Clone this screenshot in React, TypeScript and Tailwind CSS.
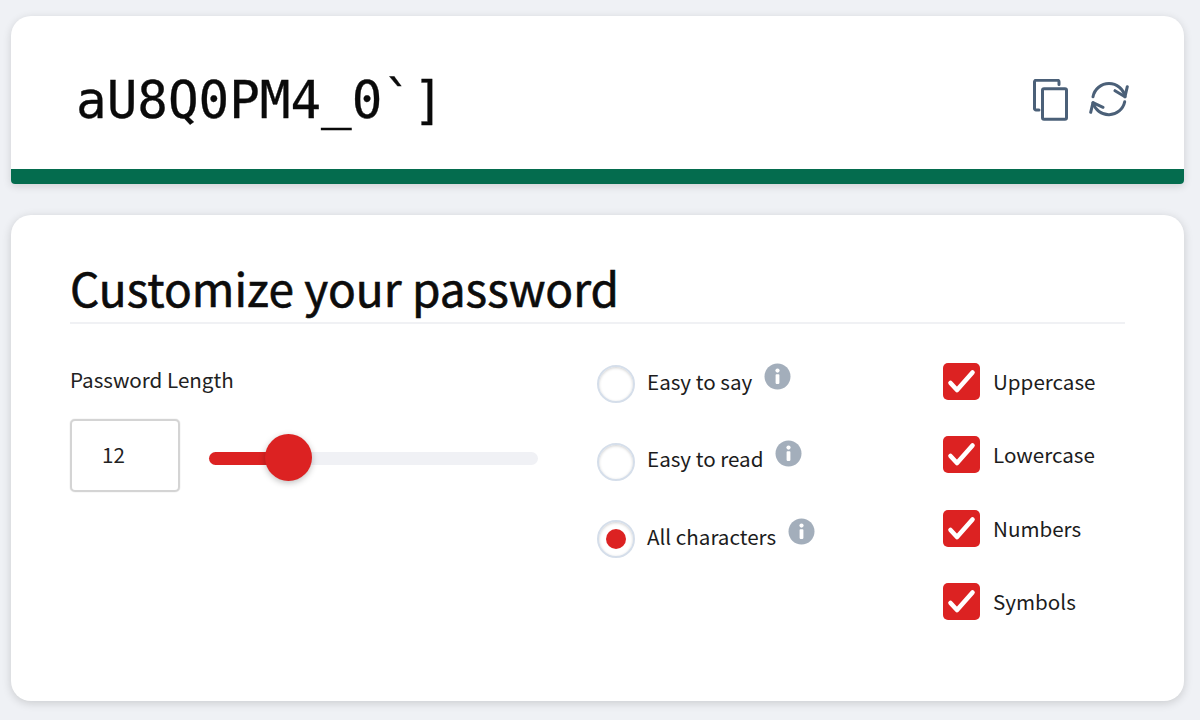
const sans = '[font-family:"Noto_Sans_CJK_SC",sans-serif]'

function CopyIcon() {
  return (
    <svg width="35" height="42" viewBox="0 0 35 42" fill="none" stroke="#4b6078" strokeWidth="3" strokeLinecap="round" strokeLinejoin="round">
      <rect x="9.5" y="9.7" width="24" height="30.6" rx="1.5" />
      <path d="M26 5.5V2.8a1.5 1.5 0 0 0-1.5-1.5H3a1.5 1.5 0 0 0-1.5 1.5v26.7a1.5 1.5 0 0 0 1.5 1.5h3" />
    </svg>
  )
}

function RefreshIcon() {
  return (
    <svg width="40" height="38" viewBox="0 0 40 38" fill="none" stroke="#4b6078" strokeWidth="3" strokeLinecap="round" strokeLinejoin="round">
      <path d="M4 15.7A16.3 16.3 0 0 1 36 15.7" />
      <path d="M35.7 20.7A16.3 16.3 0 0 1 4 21.7" />
      <path d="M38.3 5.7L36 15.7L26 9.7" />
      <path d="M1.7 31.3L4 21.7L14 26.3" />
    </svg>
  )
}

function InfoIcon() {
  return (
    <svg width="27" height="27" viewBox="0 0 27 27">
      <circle cx="13.5" cy="13.5" r="13" fill="#a3aebb" />
      <circle cx="13.5" cy="7.6" r="2.1" fill="#fff" />
      <rect x="11.6" y="11.3" width="3.8" height="9.6" rx="0.8" fill="#fff" />
    </svg>
  )
}

function Radio({ label, checked }: { label: string; checked?: boolean }) {
  return (
    <div className="flex h-[38px] items-center">
      <div className="flex size-[38px] items-center justify-center rounded-full border-2 border-[#d5deea] bg-white shadow-[inset_0_1px_3px_rgba(0,0,0,0.18)]">
        {checked && <div className="size-[20px] rounded-full bg-[#dc2222]" />}
      </div>
      <span className="-mt-[7px] ml-[12px] text-[20.6px] leading-[38px] text-[#1c1c1c]">{label}</span>
      <div className="-mt-[16px] ml-[12px]">
        <InfoIcon />
      </div>
    </div>
  )
}

function Check({ label }: { label: string }) {
  return (
    <div className="flex h-[37px] items-center">
      <div className="flex size-[37px] items-center justify-center rounded-[5px] bg-[#dc2222]">
        <svg width="29" height="25" viewBox="0 0 29 25" fill="none" stroke="#fff" strokeWidth="4.6" strokeLinecap="round" strokeLinejoin="round">
          <path d="M3.5 14L10 21L25.5 3.5" />
        </svg>
      </div>
      <span className="ml-[13px] text-[20.6px] leading-[37px] text-[#1c1c1c]">{label}</span>
    </div>
  )
}

export default function App() {
  return (
    <div className={`h-[720px] overflow-hidden bg-[#eff1f5] px-[11px] pt-4 pr-[16px] ${sans}`}>
      <div className="flex h-[168px] flex-col overflow-hidden rounded-[20px_20px_4px_4px] bg-white shadow-[0_2px_8px_rgba(0,0,0,0.14)]">
        <div className="flex flex-1 items-center justify-between pr-[55px] pl-[65px]">
          <span className="mt-[17px] font-['DejaVu_Sans_Mono',monospace] text-[50.9px] leading-none text-[#0a0a0a] [-webkit-text-stroke:0.3px_#0a0a0a]">aU8Q0PM4_0`]</span>
          <div className="mt-[14px] flex items-center gap-[21px]">
            <CopyIcon />
            <RefreshIcon />
          </div>
        </div>
        <div className="h-[15px] bg-[#046c4e]" />
      </div>

      <div className="mt-[31px] h-[486px] rounded-[20px] bg-white px-[59px] pt-[38px] shadow-[0_2px_10px_rgba(0,0,0,0.16)]">
        <h1 className="h-[71px] border-b-2 border-[#f0f1f4] text-[46px] leading-[68px] font-normal text-[#0c0c0c] [-webkit-text-stroke:0.6px_#0c0c0c]">Customize your password</h1>
        <div className="flex">
          <div className="w-[527px] pt-[38px]">
            <div className="text-[20.6px] leading-[34px] text-[#222]">Password Length</div>
            <div className="mt-[23px] flex items-center">
              <input
                readOnly
                value="12"
                className="h-[73px] w-[110px] rounded-[5px] border-2 border-[#d4d4d4] pb-[4px] pl-[30px] text-[20.6px] text-[#222] shadow-[0_0_1px_rgba(0,0,0,0.3)] outline-none"
              />
              <div className="relative mt-[6px] ml-[29px] h-[13px] w-[329px] rounded-full bg-[#f0f1f5]">
                <div className="h-[13px] w-[80px] rounded-l-full bg-[#dc2222]" />
                <div className="absolute -top-[18px] left-[56px] size-[47px] rounded-full bg-[#dc2222] shadow-[0_2px_6px_rgba(0,0,0,0.25)]" />
              </div>
            </div>
          </div>
          <div className="flex w-[346px] flex-col gap-[39.5px] pt-[41px]">
            <Radio label="Easy to say" />
            <Radio label="Easy to read" />
            <Radio label="All characters" checked />
          </div>
          <div className="flex flex-col gap-[36.3px] pt-[39px]">
            <Check label="Uppercase" />
            <Check label="Lowercase" />
            <Check label="Numbers" />
            <Check label="Symbols" />
          </div>
        </div>
      </div>
    </div>
  )
}
